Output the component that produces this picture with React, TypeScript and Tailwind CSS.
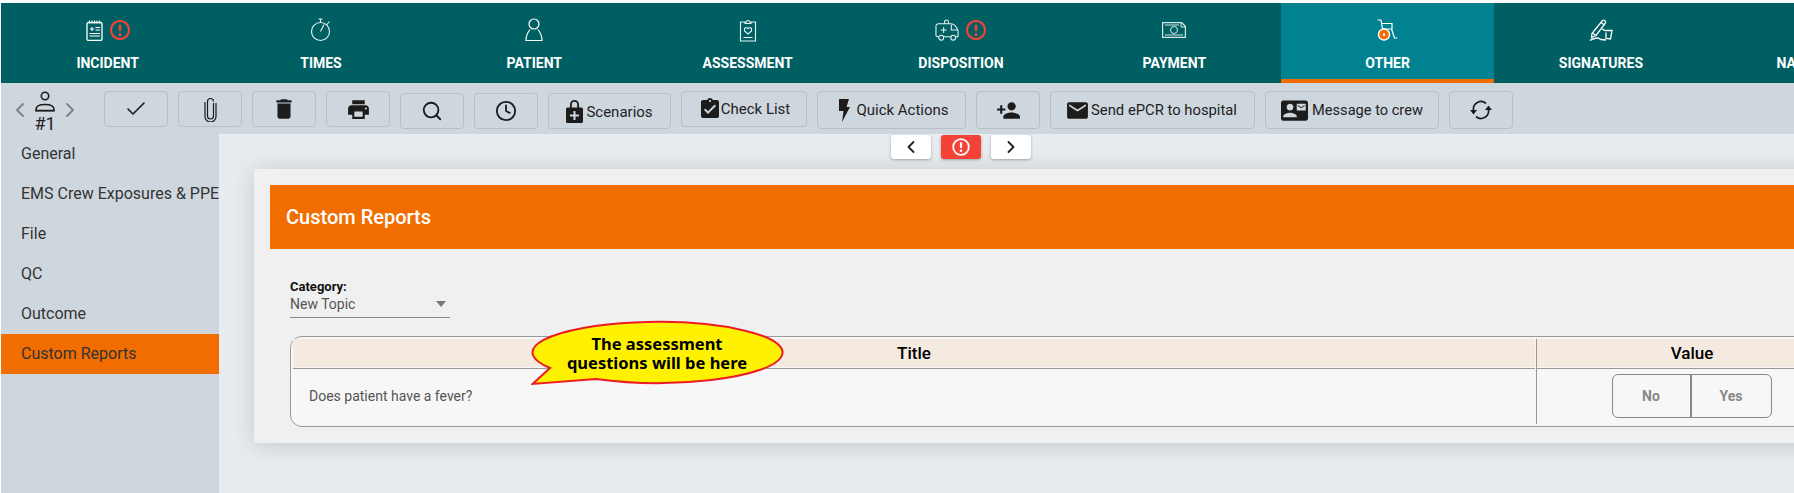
import { ReactNode } from 'react';
import { ChevronLeft, ChevronRight, Search, Clock, Check } from 'lucide-react';
import { MdDelete, MdPrint, MdAssignmentTurnedIn, MdPersonAdd, MdEmail, MdContactMail } from 'react-icons/md';

function AlertIcon() {
  return (
    <svg width="20" height="20" viewBox="0 0 20 20" fill="none" className="ml-[7px]">
      <circle cx="10" cy="10" r="9" stroke="#f0403a" strokeWidth="2.200" />
      <path d="M10 4.600v6.600" stroke="#f0403a" strokeWidth="2.600" />
      <circle cx="10" cy="14.400" r="1.500" fill="#f0403a" />
    </svg>
  );
}

function IncidentIcon() {
  return (
    <svg width="17" height="21" viewBox="0 0 17 21" fill="none" stroke="white">
      <rect x="1" y="2.500" width="15" height="18" rx="1.500" strokeWidth="1.300" />
      <path d="M3.500 0.500v3M6 0.500v3M8.500 0.500v3M11 0.500v3M13.500 0.500v3" strokeWidth="1" />
      <path d="M4 9h4M6 7v4M9.500 7.500h4.500M9.500 10h4.500M3.500 13.500h10.500M3.500 16h10.500" strokeWidth="1.100" />
    </svg>
  );
}

function TimesIcon() {
  return (
    <svg width="20" height="24" viewBox="0 0 20 24" fill="none" stroke="#e6f0f0" strokeWidth="1.100">
      <circle cx="9.500" cy="13.500" r="9" />
      <path d="M7.500 1h4M9.500 1v3.500M9.500 13.500l3.500-7M15.500 7l3-3.500" />
    </svg>
  );
}

function PatientIcon() {
  return (
    <svg width="18" height="24" viewBox="0 0 18 24" fill="none" stroke="white" strokeWidth="1.200">
      <circle cx="9" cy="6" r="5" />
      <path d="M5 11.500C3 14 1 18 1 22.500h16C17 18 15 14 13 11.500" />
    </svg>
  );
}

function AssessmentIcon() {
  return (
    <svg width="18" height="23" viewBox="0 0 18 23" fill="none" stroke="#e6f4f4" strokeWidth="1.100">
      <path d="M6 3H1.500v19h15V3H12" />
      <path d="M6 4.500V3h1.500a1.500 1.500 0 0 1 3 0H12v1.500z" />
      <path d="M5.500 9.500c1-1.200 2.500-1 3.500 0 1-1 2.500-1.200 3.500 0v2.500L9 15l-3.500-3z" />
      <path d="M4.500 18.500h9" />
    </svg>
  );
}

function AmbulanceIcon() {
  return (
    <svg width="24" height="23" viewBox="0 0 25 23" fill="none" stroke="#e6f4f4" strokeWidth="1.100">
      <path d="M4 18H2.500A1.500 1.500 0 0 1 1 16.500V7a2.500 2.500 0 0 1 2.500-2.500h13c3 0 6 3 7.500 7.500v6h-3M9 18h8" />
      <path d="M10 4.500V2.500a2 2 0 0 1 4 0v2" />
      <path d="M6 11h6M9 8v6M17 5.500V11h6" />
      <circle cx="6.500" cy="19" r="2.500" />
      <circle cx="19" cy="19" r="2.500" />
    </svg>
  );
}

function PaymentIcon() {
  return (
    <svg width="24" height="16" viewBox="0 0 24 16" fill="none" stroke="#d6e6e6" strokeWidth="1">
      <path d="M0.500 0.500h19l4 4v11H0.500z" strokeWidth="1.400" />
      <path d="M19 1v4h4M3 3h14M3 13h18" />
      <circle cx="12" cy="8" r="3.500" />
    </svg>
  );
}

function WheelchairIcon() {
  return (
    <svg width="21" height="22" viewBox="0 0 21 22" fill="none" stroke="white" strokeWidth="1.200">
      <path d="M0.500 1h3.500l1.500 9h9.500v-5.500H5M14.500 10l3 9h3" />
      <circle cx="7" cy="15.500" r="5.500" fill="#f16d00" stroke="white" strokeWidth="1.400" />
      <circle cx="7" cy="15.500" r="1.200" fill="white" stroke="none" />
    </svg>
  );
}

function SignatureIcon() {
  return (
    <svg width="24" height="23" viewBox="0 0 24 23" fill="none" stroke="white" strokeWidth="1.300">
      <path d="M3 14.500L13.500 1.500c1.500-1 3.500.5 3 2.500L7 16.500l-4.500 2z" />
      <path d="M12 3.500l3.500 2.500M4 14.500l3 2M1 21.500c3-2.500 5-2 8-2.500l3 1.500 5 .5" />
      <path d="M13 10l3 1.500h7l-1.500 8.500-4.500-.5v-6" />
    </svg>
  );
}

function LockPlusIcon() {
  return (
    <svg width="17" height="24" viewBox="0 0 17 24" fill="#1c1c1c">
      <path d="M4 9V5.500a4.500 4.500 0 0 1 9 0V9h-1.800V5.500a2.700 2.700 0 0 0-5.400 0V9z" />
      <path fillRule="evenodd" d="M1.500 8.500h14A1.500 1.500 0 0 1 17 10v12.500a1.500 1.500 0 0 1-1.500 1.500h-14A1.500 1.500 0 0 1 0 22.500V10a1.500 1.500 0 0 1 1.500-1.500zM7.500 12v3.500H4v2h3.500V21h2v-3.500H13v-2H9.500V12z" />
    </svg>
  );
}

function BoltIcon() {
  return (
    <svg width="12" height="23" viewBox="0 0 12 23" fill="#1c1c1c">
      <path d="M1 0h10L8.500 8H12L4 23l1.500-11H1z" />
    </svg>
  );
}

function ClipIcon() {
  return (
    <svg width="13" height="25" viewBox="0 0 13 25" fill="none" stroke="#1c1c1c" strokeWidth="1.200">
      <path d="M9.500 6v13a3 3 0 0 1-6 0V4.500a3 3 0 0 1 6 0" />
      <path d="M12 6v13.500a5.500 5.500 0 0 1-11 0V5" />
    </svg>
  );
}

function SyncIcon() {
  return (
    <svg width="22" height="20" viewBox="0 0 22 20" fill="none" stroke="#1c1c1c" strokeWidth="1.700">
      <path d="M16 3.500A7.500 7.500 0 0 0 3.500 10" />
      <path d="M6 16.500A7.500 7.500 0 0 0 18.500 10" />
      <path d="M0 10h7l-3.500 4.500zM15 10h7l-3.500-4.500z" fill="#1c1c1c" stroke="none" />
    </svg>
  );
}

function PersonIcon() {
  return (
    <svg width="20" height="21" viewBox="0 0 20 21" fill="none" stroke="#1c1c1c">
      <circle cx="10" cy="5" r="3.700" strokeWidth="1.600" />
      <path d="M1 19.500v-1c0-3.500 4-5 9-5s9 1.500 9 5v1z" strokeWidth="1.600" />
      <path d="M0.500 19.800h19" strokeWidth="1.400" />
    </svg>
  );
}

const tabs: { label: string; icon: ReactNode; alert?: boolean; active?: boolean }[] = [
  { label: 'Incident', icon: <IncidentIcon />, alert: true },
  { label: 'Times', icon: <TimesIcon /> },
  { label: 'Patient', icon: <PatientIcon /> },
  { label: 'Assessment', icon: <AssessmentIcon /> },
  { label: 'Disposition', icon: <AmbulanceIcon />, alert: true },
  { label: 'Payment', icon: <PaymentIcon /> },
  { label: 'Other', icon: <WheelchairIcon />, active: true },
  { label: 'Signatures', icon: <SignatureIcon /> },
  { label: 'Narrative', icon: null },
];

const sideItems = ['General', 'EMS Crew Exposures & PPE', 'File', 'QC', 'Outcome', 'Custom Reports'];

function ToolButton({ className, children }: { className: string; children: ReactNode }) {
  return (
    <button className={`flex shrink-0 items-center justify-center rounded-[4px] border border-[#b9c0c5] text-[15px] leading-none text-[#222] ${className}`}>
      {children}
    </button>
  );
}

export default function App() {
  return (
    <div className="h-[493px] w-full overflow-hidden bg-white pl-px pt-[3px] font-['Roboto',sans-serif]">
      {/* Top tabs */}
      <nav className="flex h-[80px] overflow-hidden bg-[#005f63]">
        {tabs.map((tab) => (
          <div
            key={tab.label}
            className={`relative flex h-full w-[213.33px] shrink-0 flex-col items-center ${tab.active ? 'border-b-[4px] border-[#f16d00] bg-[#008290]' : ''}`}
          >
            <div className="flex h-[24px] mt-[15px] items-center">
              {tab.icon}
              {tab.alert && <AlertIcon />}
            </div>
            <span className="mt-[9px] whitespace-nowrap text-[14px] font-bold uppercase leading-[24px] text-white">
              {tab.label}
            </span>
          </div>
        ))}
      </nav>

      {/* Toolbar */}
      <div className="flex h-[51px] items-start bg-[#cfd7de] pt-[8px]">
        <div className="flex w-[103px] shrink-0 items-start pl-[12px]">
          <ChevronLeft size={24} className="-mx-[5px] mt-[7px] text-[#7c858b]" strokeWidth={2} />
          <div className="ml-[2px] flex w-[32px] flex-col items-center">
            <PersonIcon />
            <span className="mt-[2px] text-[18px] leading-[20px] text-[#222]">#1</span>
          </div>
          <ChevronRight size={24} className="-mx-[5px] ml-[-3px] mt-[7px] text-[#7c858b]" strokeWidth={2} />
        </div>
        <div className="flex items-start gap-[10px]">
          <ToolButton className="h-[36px] w-[64px]"><Check size={24} strokeWidth={1.600} color="#1c1c1c" /></ToolButton>
          <ToolButton className="h-[36px] w-[64px]"><ClipIcon /></ToolButton>
          <ToolButton className="h-[36px] w-[64px]"><MdDelete size={26} color="#1c1c1c" /></ToolButton>
          <ToolButton className="h-[36px] w-[64px]"><MdPrint size={25} color="#1c1c1c" /></ToolButton>
          <ToolButton className="mt-[2px] h-[36px] w-[64px]"><Search size={22} strokeWidth={2} color="#1c1c1c" /></ToolButton>
          <ToolButton className="mt-[2px] h-[36px] w-[64px]"><Clock size={22} strokeWidth={2} color="#1c1c1c" /></ToolButton>
          <ToolButton className="mt-[2px] h-[36px] w-[123px] gap-[3px]"><LockPlusIcon /><span className="mt-[2px]">Scenarios</span></ToolButton>
          <ToolButton className="h-[36px] w-[126px]"><MdAssignmentTurnedIn size={24} color="#1c1c1c" className="-mr-px" /><span>Check List</span></ToolButton>
          <ToolButton className="h-[38px] w-[149px] gap-[6px] pl-[4px]"><BoltIcon /><span>Quick Actions</span></ToolButton>
          <ToolButton className="h-[38px] w-[64px]"><MdPersonAdd size={25} color="#1c1c1c" /></ToolButton>
          <ToolButton className="h-[38px] w-[205px] gap-[1px] pr-[3px]"><MdEmail size={25} color="#1c1c1c" /><span className="text-[14.800px]">Send ePCR to hospital</span></ToolButton>
          <ToolButton className="h-[38px] w-[174px] gap-[4px]"><MdContactMail size={27} color="#1c1c1c" /><span className="text-[14.600px]">Message to crew</span></ToolButton>
          <ToolButton className="h-[38px] w-[64px]"><SyncIcon /></ToolButton>
        </div>
      </div>

      <div className="flex h-[359px]">
        {/* Left menu */}
        <aside className="w-[218px] shrink-0 bg-[#cfd7de]">
          {sideItems.map((item) => (
            <div
              key={item}
              className={`flex h-[40px] items-center whitespace-nowrap pl-[20px] text-[16px] text-[#333] ${item === 'Custom Reports' ? 'bg-[#f16d00] text-[#4a2200]' : ''}`}
            >
              {item}
            </div>
          ))}
        </aside>

        {/* Content */}
        <main className="min-w-0 flex-1 overflow-hidden bg-[#e8ecef]">
          <div className="ml-[672px] mt-px flex gap-[10px]">
            <button className="flex h-[24px] w-[40px] items-center justify-center rounded-[3px] bg-white shadow-[0_1px_3px_rgba(0,0,0,0.3)]">
              <ChevronLeft size={20} strokeWidth={2.200} color="#222" />
            </button>
            <button className="flex h-[24px] w-[40px] items-center justify-center rounded-[3px] bg-[#f44336] shadow-[0_1px_3px_rgba(0,0,0,0.3)]">
              <svg width="18" height="18" viewBox="0 0 18 18" fill="none">
                <circle cx="9" cy="9" r="7.800" stroke="white" strokeWidth="1.800" />
                <path d="M9 4.200v5.800" stroke="white" strokeWidth="2.200" />
                <circle cx="9" cy="12.800" r="1.300" fill="white" />
              </svg>
            </button>
            <button className="flex h-[24px] w-[40px] items-center justify-center rounded-[3px] bg-white shadow-[0_1px_3px_rgba(0,0,0,0.3)]">
              <ChevronRight size={20} strokeWidth={2.200} color="#222" />
            </button>
          </div>

          <section className="ml-[35px] mt-[10px] w-[1640px] bg-[#f0f0f0] p-[16px] shadow-[0_2px_22px_rgba(0,0,0,0.16)]">
            <div className="flex h-[64px] items-center bg-[#f16d00] pl-[16px] text-[20px] font-medium text-white">
              Custom Reports
            </div>

            <div className="ml-[20px] mt-[30px] w-[160px]">
              <div className="text-[13px] font-bold leading-[16px] text-[#111]">Category:</div>
              <div className="flex h-[23px] items-start justify-between border-b border-[#888] pr-[4px] text-[14px] leading-[18px] text-[#555]">
                <span>New Topic</span>
                <span className="mt-[6px] h-0 w-0 border-x-[5px] border-t-[6px] border-x-transparent border-t-[#777]" />
              </div>
            </div>

            <div className="relative ml-[20px] mt-[18px] flex h-[91px] w-[1558px] rounded-[12px] border border-[#999] bg-[#f7f7f7] p-[2px]">
              <div className="mr-[1px] w-[1242px] shrink-0">
                <div className="h-[28px] bg-[#f5eadf] text-center text-[17px] font-medium leading-[28px] text-black">Title</div>
                <div className="mt-[1px] flex h-[56px] items-center border-t border-[#999] pl-[16px] text-[14px] text-[#555]">
                  Does patient have a fever?
                </div>
              </div>
              <div className="flex-1 border-l border-[#999]">
                <div className="h-[28px] bg-[#f5eadf] pl-[2px] text-center text-[17px] font-medium leading-[28px] text-black">Value</div>
                <div className="mt-[1px] flex h-[56px] justify-center border-t border-[#999] pl-[1px] pt-[5px]">
                  <div className="flex h-[44px] w-[160px] rounded-[6px] border border-[#888] text-[14px] font-bold text-[#888]">
                    <span className="flex w-1/2 items-center justify-center border-r-2 border-[#888]">No</span>
                    <span className="flex w-1/2 items-center justify-center">Yes</span>
                  </div>
                </div>
              </div>

              {/* Annotation callout */}
              <div className="absolute left-[240px] top-[-17px] h-[66px] w-[254px]">
                <svg width="254" height="66" viewBox="0 0 254 66" className="absolute left-0 top-0">
                  <path d="M19 48A125 30.500 0 1 1 65 59L1.500 64Z" fill="#fff200" stroke="#ed1c24" strokeWidth="2" />
                </svg>
                <div className="relative pr-[2px] pt-[14px] text-center font-['Noto_Sans',sans-serif] text-[16.500px] font-bold leading-[19px] text-black">
                  The assessment
                  <br />
                  questions will be here
                </div>
              </div>
            </div>
          </section>
        </main>
      </div>
    </div>
  );
}
